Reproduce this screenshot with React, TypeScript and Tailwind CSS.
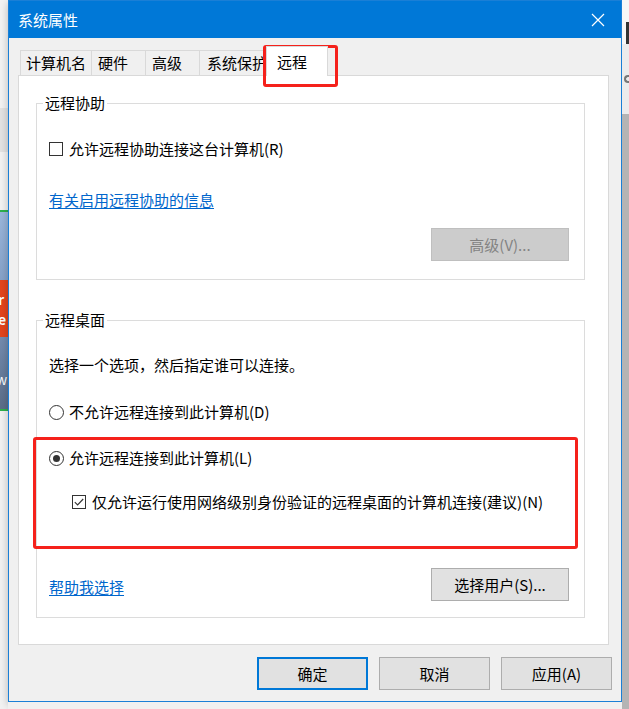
import React from 'react';

type BoxProps = { checked?: boolean };

const CheckBox = ({ checked }: BoxProps) => (
  <span className="w-[14px] h-[14px] border border-[#333333] bg-white flex items-center justify-center shrink-0">
    {checked && (
      <svg width="12" height="12" viewBox="0 0 12 12">
        <path d="M1.8 6.2 L4.6 9 L10.2 3" fill="none" stroke="#333333" strokeWidth="1.1" />
      </svg>
    )}
  </span>
);

const Radio = ({ checked }: BoxProps) => (
  <span className="w-[15px] h-[15px] rounded-full border border-[#333333] bg-white flex items-center justify-center shrink-0">
    {checked && <span className="w-[7px] h-[7px] rounded-full bg-[#333333]" />}
  </span>
);

const Button = ({ label, disabled, primary }: { label: string; disabled?: boolean; primary?: boolean }) => {
  let cls = 'border border-[#adadad] bg-[#e1e1e1] text-black';
  if (disabled) cls = 'border border-[#bfbfbf] bg-[#cccccc] text-[#838383]';
  if (primary) cls = 'border-2 border-[#0078d7] bg-[#e1e1e1] text-black';
  return <div className={`h-[33px] flex items-center justify-center ${cls}`}>{label}</div>;
};

const tabs = [
  { label: '计算机名', w: 'w-[71px]', pl: 'pl-[5px]' },
  { label: '硬件', w: 'w-[54px]', pl: 'pl-[6px]' },
  { label: '高级', w: 'w-[54px]', pl: 'pl-[6px]' },
  { label: '系统保护', w: 'w-[69px]', pl: 'pl-[7px]' },
];

const LeftStrip = () => (
  <div className="w-[8px] h-full flex flex-col shrink-0">
    <div className="h-[108px] bg-[#f3f3f3]" />
    <div className="h-[44px] bg-[#e3e3e3]" />
    <div className="h-[58px] bg-[#f3f3f3]" />
    <div className="h-[2px] bg-[#2fb14d]" />
    <div className="h-[197px] bg-gradient-to-b from-[#9bb7dc] via-[#7d98bf] to-[#5b6d88] flex flex-col overflow-hidden">
      <div className="h-[68px]" />
      <div className="h-[57px] bg-[#e3451c] text-white font-bold text-[14px] leading-[20px] flex flex-col justify-center -ml-[2px]">
        <span>r</span>
        <span>e</span>
      </div>
      <div className="mt-[32px] text-white text-[14px] leading-[20px] -ml-[4px]">w</div>
    </div>
    <div className="h-[2px] bg-[#2fb14d]" />
    <div className="flex-1 bg-[#f2f2f2]" />
  </div>
);

const RightStrip = () => (
  <div className="w-[7px] h-full flex flex-col shrink-0">
    <div className="h-[22px] bg-[#f7f7f7]" />
    <div className="h-[22px] bg-[#f7f7f7] flex justify-end">
      <div className="w-[3px] h-full bg-[#333333]" />
    </div>
    <div className="h-[70px] bg-[#ececec] flex items-center">
      <div className="ml-[2px] w-[6px] h-[8px] rounded-l-full border-l-2 border-y-2 border-[#777777]" />
    </div>
    <div className="flex-1 bg-[#b4b4b4]" />
  </div>
);

export default function App() {
  return (
    <div className="w-[629px] h-[709px] flex bg-[#eeeeee] overflow-hidden relative font-['Microsoft_YaHei_UI','Noto_Sans_CJK_SC',sans-serif] text-[15px] leading-[20px] text-black">
      <LeftStrip />
      <div className="w-[614px] h-full flex flex-col shrink-0">
        <div className="w-[614px] h-[702px] border border-[#1a7fd6] bg-[#f0f0f0] flex flex-col shadow-[0_3px_8px_rgba(0,0,0,0.25)]">
          <div className="h-[37px] bg-[#0078d7] flex items-center justify-between pl-[9px] text-white">
            <span>系统属性</span>
            <div className="w-[46px] h-full flex items-center justify-center">
              <svg width="14" height="14" viewBox="0 0 14 14">
                <path d="M1 1 L13 13 M13 1 L1 13" stroke="white" strokeWidth="1.2" />
              </svg>
            </div>
          </div>

          <div className="h-[37px] flex items-end pl-[11px]">
            {tabs.map((t, i) => (
              <div
                key={t.label}
                className={`${t.w} ${t.pl} h-[25px] pt-[2px] border-t border-l ${i === tabs.length - 1 ? 'border-r' : ''} border-[#d9d9d9] bg-[#f0f0f0] whitespace-nowrap overflow-hidden`}
              >
                {t.label}
              </div>
            ))}
            <div className="relative z-10 -ml-[2px] -mb-[1px] w-[62px] h-[30px] pt-[5px] pl-[10px] border-t border-x border-[#d9d9d9] bg-white">
              远程
            </div>
          </div>

          <div className="ml-[9px] w-[591px] h-[570px] border border-[#d9d9d9] bg-white flex flex-col">
            <fieldset className="mt-[17px] ml-[17px] w-[549px] border border-[#dcdcdc]">
              <legend className="ml-[6px] px-[2px]">远程协助</legend>
              <div className="pl-[12px] pr-[15px] pb-[18px] flex flex-col">
                <div className="mt-[26px] flex items-center gap-[6px]">
                  <CheckBox />
                  <span>允许远程协助连接这台计算机(R)</span>
                </div>
                <div className="mt-[31px]">
                  <span className="text-[#0066cc] underline underline-offset-2">有关启用远程协助的信息</span>
                </div>
                <div className="mt-[18px] flex justify-end">
                  <div className="w-[138px]">
                    <Button label="高级(V)..." disabled />
                  </div>
                </div>
              </div>
            </fieldset>

            <fieldset className="mt-[30px] ml-[17px] w-[549px] border border-[#dcdcdc]">
              <legend className="ml-[6px] px-[2px]">远程桌面</legend>
              <div className="pl-[12px] pr-[15px] pb-[16px] flex flex-col">
                <div className="mt-[25px]">选择一个选项，然后指定谁可以连接。</div>
                <div className="mt-[27px] flex items-center gap-[5px]">
                  <Radio />
                  <span>不允许远程连接到此计算机(D)</span>
                </div>
                <div className="mt-[26px] flex items-center gap-[5px]">
                  <Radio checked />
                  <span>允许远程连接到此计算机(L)</span>
                </div>
                <div className="mt-[24px] ml-[23px] flex items-center gap-[6px]">
                  <CheckBox checked />
                  <span>仅允许运行使用网络级别身份验证的远程桌面的计算机连接(建议)(N)</span>
                </div>
                <div className="mt-[56px] flex items-center justify-between">
                  <span className="mt-[4px] text-[#0066cc] underline underline-offset-2">帮助我选择</span>
                  <div className="w-[138px]">
                    <Button label="选择用户(S)..." />
                  </div>
                </div>
              </div>
            </fieldset>
          </div>

          <div className="mt-[12px] pr-[9px] flex justify-end gap-[11px]">
            <div className="w-[111px]">
              <Button label="确定" primary />
            </div>
            <div className="w-[111px]">
              <Button label="取消" />
            </div>
            <div className="w-[111px]">
              <Button label="应用(A)" />
            </div>
          </div>
        </div>
        <div className="flex-1 bg-[#f0f0f0]" />
      </div>
      <RightStrip />

      <div className="absolute left-[263px] top-[45px] w-[75px] h-[42px] border-[3px] border-[#f5211b] rounded-[3px] pointer-events-none" />
      <div className="absolute left-[33px] top-[437px] w-[545px] h-[112px] border-[3px] border-[#f5211b] rounded-[3px] pointer-events-none" />
    </div>
  );
}
